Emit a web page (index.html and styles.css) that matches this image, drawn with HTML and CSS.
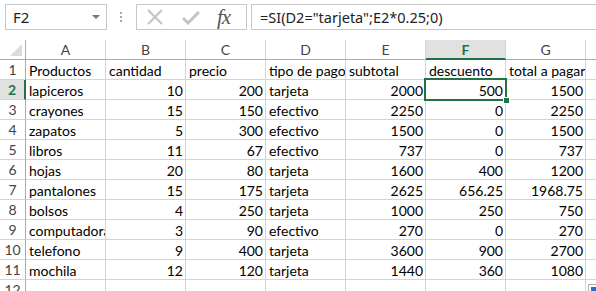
FILE: index.html
```html
<!DOCTYPE html>
<html>
<head>
  <title>Libro1 - Excel</title>
  <link rel="stylesheet" href="styles.css">
</head>
<body>
  <div class="toolbar">
    <div class="namebox">F2<span class="arrow"></span></div>
    <div class="dots"><i></i><i></i><i></i></div>
    <div class="fxbox">
      <svg class="ico-x" width="18" height="16" viewBox="0 0 18 16"><path d="M2 1 L16 15 M16 1 L2 15" stroke="#c4c4c4" stroke-width="2" fill="none"/></svg>
      <svg class="ico-ok" width="18" height="14" viewBox="0 0 18 14"><path d="M1 7 L6 12 L17 1" stroke="#c4c4c4" stroke-width="3" fill="none"/></svg>
      <span class="fx">fx</span>
    </div>
    <div class="formula">=SI(D2="tarjeta";E2*0.25;0)</div>
  </div>

  <div class="sheet">
    <div class="corner"><span class="tri"></span></div>
    <div class="colhead">A</div><div class="colhead">B</div><div class="colhead">C</div><div class="colhead">D</div>
    <div class="colhead">E</div><div class="colhead sel">F</div><div class="colhead">G</div><div class="colhead"></div>

    <div class="rowhead">1</div>
    <div class="cell">Productos</div><div class="cell">cantidad</div><div class="cell">precio</div><div class="cell">tipo de pago</div>
    <div class="cell">subtotal</div><div class="cell">descuento</div><div class="cell">total a pagar</div><div class="cell"></div>

    <div class="rowhead sel">2</div>
    <div class="cell">lapiceros</div><div class="cell num">10</div><div class="cell num">200</div><div class="cell">tarjeta</div>
    <div class="cell num">2000</div><div class="cell num active">500</div><div class="cell num">1500</div><div class="cell"></div>

    <div class="rowhead">3</div>
    <div class="cell">crayones</div><div class="cell num">15</div><div class="cell num">150</div><div class="cell">efectivo</div>
    <div class="cell num">2250</div><div class="cell num">0</div><div class="cell num">2250</div><div class="cell"></div>

    <div class="rowhead">4</div>
    <div class="cell">zapatos</div><div class="cell num">5</div><div class="cell num">300</div><div class="cell">efectivo</div>
    <div class="cell num">1500</div><div class="cell num">0</div><div class="cell num">1500</div><div class="cell"></div>

    <div class="rowhead">5</div>
    <div class="cell">libros</div><div class="cell num">11</div><div class="cell num">67</div><div class="cell">efectivo</div>
    <div class="cell num">737</div><div class="cell num">0</div><div class="cell num">737</div><div class="cell"></div>

    <div class="rowhead">6</div>
    <div class="cell">hojas</div><div class="cell num">20</div><div class="cell num">80</div><div class="cell">tarjeta</div>
    <div class="cell num">1600</div><div class="cell num">400</div><div class="cell num">1200</div><div class="cell"></div>

    <div class="rowhead">7</div>
    <div class="cell">pantalones</div><div class="cell num">15</div><div class="cell num">175</div><div class="cell">tarjeta</div>
    <div class="cell num">2625</div><div class="cell num">656.25</div><div class="cell num">1968.75</div><div class="cell"></div>

    <div class="rowhead">8</div>
    <div class="cell">bolsos</div><div class="cell num">4</div><div class="cell num">250</div><div class="cell">tarjeta</div>
    <div class="cell num">1000</div><div class="cell num">250</div><div class="cell num">750</div><div class="cell"></div>

    <div class="rowhead">9</div>
    <div class="cell">computadora</div><div class="cell num">3</div><div class="cell num">90</div><div class="cell">efectivo</div>
    <div class="cell num">270</div><div class="cell num">0</div><div class="cell num">270</div><div class="cell"></div>

    <div class="rowhead">10</div>
    <div class="cell">telefono</div><div class="cell num">9</div><div class="cell num">400</div><div class="cell">tarjeta</div>
    <div class="cell num">3600</div><div class="cell num">900</div><div class="cell num">2700</div><div class="cell"></div>

    <div class="rowhead">11</div>
    <div class="cell">mochila</div><div class="cell num">12</div><div class="cell num">120</div><div class="cell">tarjeta</div>
    <div class="cell num">1440</div><div class="cell num">360</div><div class="cell num">1080</div><div class="cell"></div>

    <div class="rowhead">12</div>
    <div class="cell"></div><div class="cell"></div><div class="cell"></div><div class="cell"></div>
    <div class="cell"></div><div class="cell"></div><div class="cell"></div><div class="cell"></div>
  </div>

  <div class="paste-btn"><span></span></div>
</body>
</html>
```

FILE: styles.css
```css
body {
  margin: 0;
  background-color: #fff;
  overflow: hidden;
  font-family: Lato, "Liberation Sans", sans-serif;
  color: #000;
}

/* barra de fórmulas */
.toolbar {
  height: 40px;
  box-sizing: border-box;
  padding-top: 4px;
  display: flex;
  align-items: flex-start;
  white-space: nowrap;
  overflow: hidden;
}

.namebox {
  position: relative;
  margin-left: 5px;
  width: 102px;
  height: 26px;
  box-sizing: border-box;
  border: 1px solid #c8c8c8;
  padding-left: 7px;
  font: 15px/24px "Noto Sans", sans-serif;
  color: #222;
}

.namebox .arrow {
  position: absolute;
  right: 6px;
  top: 10px;
  border-left: 4px solid transparent;
  border-right: 4px solid transparent;
  border-top: 4px solid #777;
}

.dots {
  margin-left: 13px;
  padding-top: 8px;
  display: flex;
  flex-direction: column;
  gap: 2px;
}

.dots i {
  display: block;
  width: 2px;
  height: 2px;
  background-color: #a8a8a8;
}

.fxbox {
  margin-left: 14px;
  width: 111px;
  height: 26px;
  box-sizing: border-box;
  border: 1px solid #c8c8c8;
  display: flex;
  align-items: center;
}

.ico-x {
  margin-left: 9px;
}

.ico-ok {
  margin-left: 18px;
  margin-top: 2px;
}

.fx {
  margin-left: 17px;
  font: italic 21px/24px "Liberation Serif", serif;
  color: #555;
  letter-spacing: -1px;
}

.formula {
  margin-left: 4px;
  flex: 1;
  height: 26px;
  box-sizing: border-box;
  border: 1px solid #c8c8c8;
  border-right: none;
  padding-left: 8px;
  font: 14.5px/24px "Noto Sans", sans-serif;
  color: #222;
}

/* hoja */
.sheet {
  display: grid;
  grid-template-columns: 26px repeat(8, 80px);
  grid-auto-rows: 20px;
  width: 596px;
  overflow: hidden;
  font-size: 14px;
  line-height: 19px;
}

.corner,
.colhead,
.rowhead,
.cell {
  box-sizing: border-box;
  border-right: 1px solid #d4d4d4;
  border-bottom: 1px solid #d4d4d4;
  white-space: nowrap;
  overflow: hidden;
}

.corner {
  position: relative;
  border-right-color: #ababab;
  border-bottom-color: #ababab;
}

.corner .tri {
  position: absolute;
  right: 3px;
  bottom: 3px;
  border-left: 12px solid transparent;
  border-bottom: 12px solid #dcdcdc;
}

.colhead {
  text-align: center;
  color: #444;
  border-bottom-color: #ababab;
}

.rowhead {
  text-align: center;
  color: #444;
  border-right-color: #ababab;
}

.colhead.sel {
  background-color: #e1e1e1;
  color: #217346;
  font-weight: bold;
  border-bottom: 2px solid #217346;
}

.rowhead.sel {
  background-color: #e1e1e1;
  color: #217346;
  font-weight: bold;
  border-right: 2px solid #217346;
}

.cell {
  padding: 1px 2px 0 3px;
}

.num {
  text-align: right;
}

.active {
  position: relative;
  overflow: visible;
}

.active::after {
  content: "";
  position: absolute;
  left: -2px;
  top: -2px;
  right: -2px;
  bottom: -2px;
  border: 2px solid #217346;
}

.active::before {
  content: "";
  position: absolute;
  right: -5px;
  bottom: -5px;
  width: 5px;
  height: 5px;
  background-color: #217346;
  border: 1px solid #fff;
  z-index: 1;
}

.paste-btn {
  position: absolute;
  left: 588px;
  top: 284px;
  width: 12px;
  height: 10px;
  border: 1px solid #b0b0b0;
  background-color: #fff;
}

.paste-btn span {
  display: block;
  margin: 2px;
  width: 7px;
  height: 5px;
  background-color: #2b6cc4;
}
```
